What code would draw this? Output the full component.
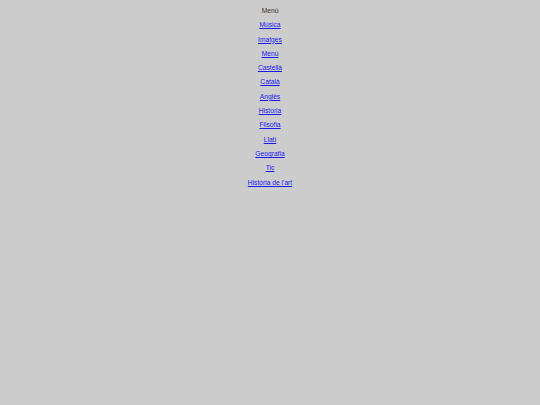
const links = [
  "Música",
  "Imatges",
  "Menú",
  "Castellà",
  "Català",
  "Anglès",
  "Historia",
  "Filsofia",
  "Llatí",
  "Geografia",
  "Tic",
  "Història de l'art",
];

export default function App() {
  return (
    <div
      className="min-h-[405px] w-full bg-[#cccccc] pt-[4px] text-center text-[6.7px] leading-[14.3px]"
      style={{ fontFamily: '"Liberation Sans", Arial, sans-serif' }}
    >
      <div className="text-[#333333]">Menú</div>
      {links.map((l) => (
        <div key={l}>
          <a href="#" className="text-[#1a1aee] underline">
            {l}
          </a>
        </div>
      ))}
    </div>
  );
}
